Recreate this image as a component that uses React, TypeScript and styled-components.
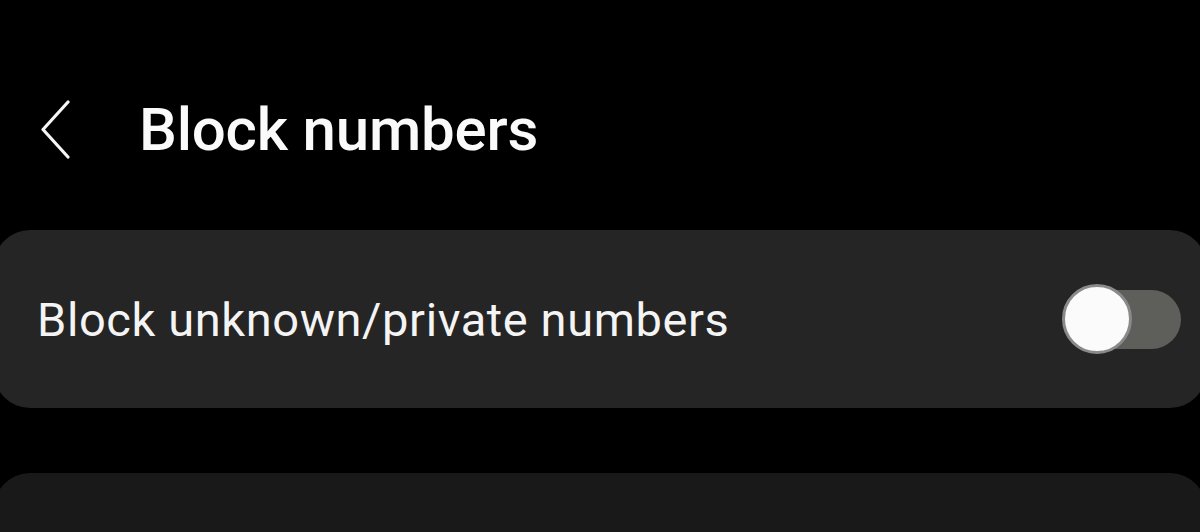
import React from "react";
import styled, { createGlobalStyle } from "styled-components";

const Global = createGlobalStyle`
  html, body { margin: 0; padding: 0; background: #000; }
  body { width: 1200px; height: 532px; overflow: hidden; font-family: Roboto, "Noto Sans", sans-serif; }
`;

const Screen = styled.div`
  width: 1200px;
  height: 532px;
  background: #000;
  display: flex;
  flex-direction: column;
  overflow: hidden;
`;

const Header = styled.div`
  height: 230px;
  flex-shrink: 0;
  display: flex;
  align-items: center;
  padding: 30px 0 0 40px;
  box-sizing: border-box;
`;

const BackButton = styled.button`
  background: none;
  border: none;
  padding: 0;
  width: 36px;
  height: 60px;
  display: flex;
  align-items: center;
  justify-content: center;
  cursor: pointer;
`;

const Title = styled.h1`
  margin: 0 0 0 63px;
  color: #fafafa;
  font-family: Roboto, sans-serif;
  font-weight: 500;
  font-size: 60px;
  letter-spacing: -0.2px;
  line-height: 1;
`;

const Card = styled.div<{ $tone: string; $height: number }>`
  margin: 0 0 0 -6px;
  width: 1212px;
  height: ${(p) => p.$height}px;
  background: ${(p) => p.$tone};
  border-radius: 36px;
  display: flex;
  align-items: center;
  justify-content: space-between;
  box-sizing: border-box;
  padding: 0 24px 0 43px;
  flex-shrink: 0;
`;

const Gap = styled.div`
  height: 65px;
  flex-shrink: 0;
`;

const Label = styled.span`
  color: #f4f4f4;
  font-family: Roboto, sans-serif;
  font-size: 47px;
  font-weight: 400;
  letter-spacing: 0.6px;
`;

const Switch = styled.div`
  position: relative;
  width: 120px;
  height: 70px;
  display: flex;
  align-items: center;
`;

const Track = styled.div`
  margin-left: 12px;
  width: 107px;
  height: 59px;
  border-radius: 30px;
  background: #5e5f5a;
`;

const Thumb = styled.div`
  position: absolute;
  left: 0;
  top: 0;
  width: 70px;
  height: 70px;
  border-radius: 50%;
  background: #fbfbfb;
  border: 3px solid #8a8a8a;
  box-sizing: border-box;
`;

export default function App() {
  return (
    <>
      <Global />
      <Screen>
        <Header>
          <BackButton aria-label="Back">
            <svg width="36" height="60" viewBox="0 0 36 60">
              <path
                d="M28 2 L3 29.5 L28 57"
                fill="none"
                stroke="#f5f5f5"
                strokeWidth="3.2"
                strokeLinecap="round"
                strokeLinejoin="round"
              />
            </svg>
          </BackButton>
          <Title>Block numbers</Title>
        </Header>
        <Card $tone="#252525" $height={178}>
          <Label>Block unknown/private numbers</Label>
          <Switch>
            <Track />
            <Thumb />
          </Switch>
        </Card>
        <Gap />
        <Card $tone="#191919" $height={120} />
      </Screen>
    </>
  );
}
